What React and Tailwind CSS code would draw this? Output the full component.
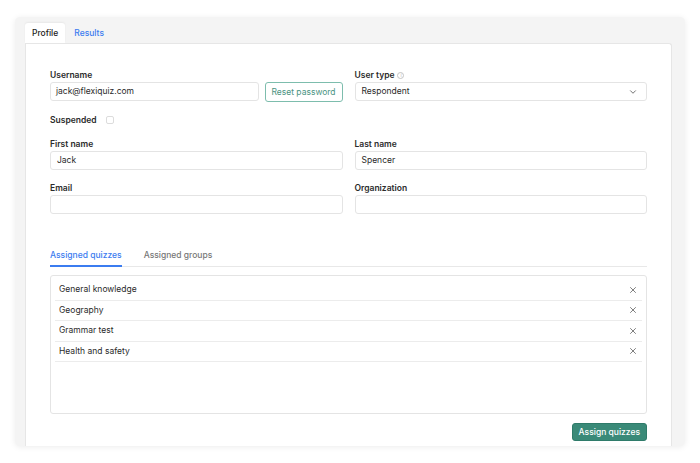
import React, { useState } from 'react';
import { X, ChevronDown } from 'lucide-react';

const quizzes = ['General knowledge', 'Geography', 'Grammar test', 'Health and safety'];

function Field({ label, value, children, info }) {
    return (
        <div className="flex flex-col">
            <div className="flex items-center gap-[3px] h-[12px] mb-[1px] text-[8.5px] font-semibold text-[#2b2b2b] leading-[12px]">
                {label}
                {info && (
                    <span className="w-[7px] h-[7px] rounded-full border border-[#c4c4c4] text-[5px] leading-[5px] text-[#bbb] flex items-center justify-center font-normal">i</span>
                )}
            </div>
            <div className="h-[19px] border border-[#e4e4e4] rounded-[3px] px-[6px] flex items-center justify-between text-[8.5px] text-[#2a2a2a]">
                <span>{value}</span>
                {children}
            </div>
        </div>
    );
}

export default function App() {
    const [tab, setTab] = useState('quizzes');

    return (
        <div className="w-[700px] h-[463px] bg-white pt-[17px] px-[15px]" style={{ fontFamily: 'Inter, "Noto Sans", sans-serif' }}>
            <div className="bg-[#f4f4f4] rounded-[5px] shadow-[0_1px_6px_rgba(0,0,0,0.08)] pl-[10px] pr-[13px] pt-[6px]">
                {/* Tabs */}
                <div className="flex items-end h-[20px] text-[8.5px]">
                    <div className="h-[20px] px-[7px] bg-white rounded-t-[3px] shadow-[0_-1px_2px_rgba(0,0,0,0.05)] flex items-center font-medium text-[#222]">Profile</div>
                    <div className="h-[20px] px-[9px] flex items-center font-medium text-[#3b7cf0]">Results</div>
                </div>

                {/* Panel */}
                <div className="bg-white border-t border-x border-[#e6e6e6] rounded-tr-[3px] px-[24px] pt-[25px] pb-[5px]">
                    <div className="grid grid-cols-2 gap-x-[12px]">
                        <div className="flex flex-col">
                            <div className="h-[12px] mb-[1px] text-[8.5px] font-semibold text-[#2b2b2b] leading-[12px]">Username</div>
                            <div className="flex gap-[6px]">
                                <div className="flex-1 h-[19px] border border-[#e4e4e4] rounded-[3px] px-[5px] flex items-center text-[8.5px] text-[#2a2a2a]">jack@flexiquiz.com</div>
                                <button className="h-[20px] w-[78px] border border-[#7dbdad] rounded-[3px] text-[8.5px] text-[#4a9382] bg-white">Reset password</button>
                            </div>
                        </div>
                        <Field label="User type" value="Respondent" info>
                            <ChevronDown size={10} strokeWidth={2} className="text-[#555] mr-[2px]" />
                        </Field>
                    </div>

                    <div className="flex items-center gap-[9px] mt-[12px] h-[12px] text-[8.5px] font-semibold text-[#2b2b2b]">
                        Suspended
                        <span className="w-[8px] h-[8px] border border-[#dcdcdc] rounded-[2px]" />
                    </div>

                    <div className="grid grid-cols-2 gap-x-[12px] gap-y-[12px] mt-[12px]">
                        <Field label="First name" value="Jack" />
                        <Field label="Last name" value="Spencer" />
                        <Field label="Email" value="" />
                        <Field label="Organization" value="" />
                    </div>

                    {/* Assigned tabs */}
                    <div className="mt-[35px] flex border-b border-[#e8e8e8] text-[8.5px] font-medium leading-[12px]">
                        <button
                            onClick={() => setTab('quizzes')}
                            className={`pb-[4px] border-b-2 -mb-px ${tab === 'quizzes' ? 'border-[#3b7cf0] text-[#3b7cf0]' : 'border-transparent text-[#777]'}`}
                        >
                            Assigned quizzes
                        </button>
                        <button
                            onClick={() => setTab('groups')}
                            className={`ml-[22px] pb-[4px] border-b-2 -mb-px ${tab === 'groups' ? 'border-[#3b7cf0] text-[#3b7cf0]' : 'border-transparent text-[#777]'}`}
                        >
                            Assigned groups
                        </button>
                    </div>

                    {/* Quiz list */}
                    <div className="mt-[8px] h-[139px] border border-[#e4e4e4] rounded-[3px] px-[4px] pt-[4px]">
                        {quizzes.map((q) => (
                            <div key={q} className="h-[20.5px] flex items-center justify-between px-[4px] border-b border-[#ececec] text-[8.5px] text-[#2a2a2a]">
                                <span>{q}</span>
                                <X size={10} strokeWidth={1.5} className="text-[#333]" />
                            </div>
                        ))}
                    </div>

                    <div className="flex justify-end mt-[9px]">
                        <button className="h-[18px] px-[6px] bg-[#3a8a78] border border-[#2f7b6a] rounded-[3px] text-[8.5px] font-medium text-white">Assign quizzes</button>
                    </div>
                </div>
            </div>
        </div>
    );
}
